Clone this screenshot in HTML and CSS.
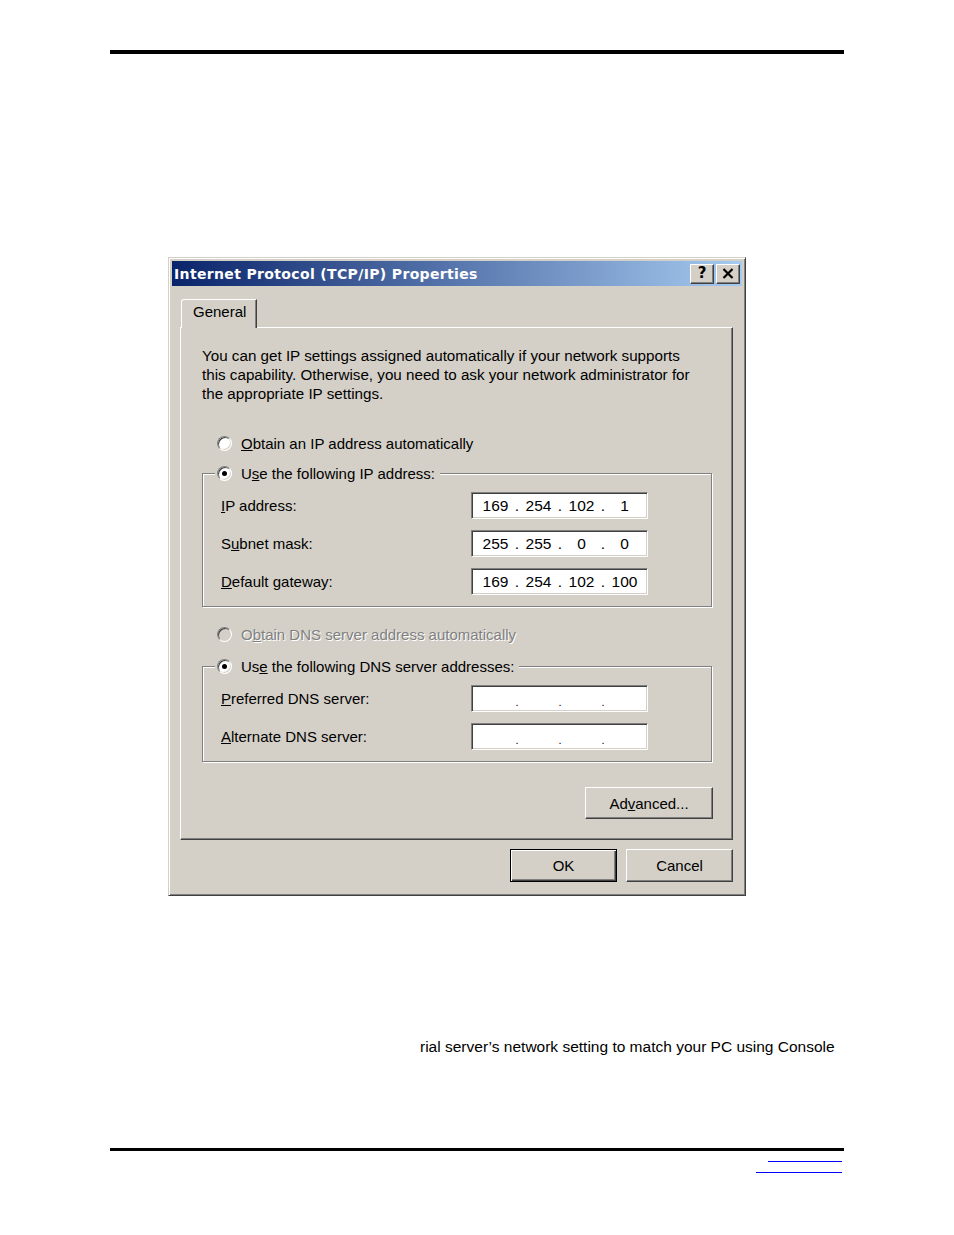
FILE: index.html
```html
<!DOCTYPE html>
<html>
<head>
<meta charset="utf-8">
<link rel="stylesheet" href="styles.css">
</head>
<body>
<div class="page">
  <div class="rule-top"></div>
  <div class="dialog">
    <div class="titlebar">
      <span class="title">Internet Protocol (TCP/IP) Properties</span>
      <div class="tbtns">
        <span class="tbtn help">?</span>
        <span class="tbtn close"><svg width="12" height="11" viewBox="0 0 12 11"><path d="M1.5 1 L10.5 10 M10.5 1 L1.5 10" stroke="#000" stroke-width="2.2" fill="none"/></svg></span>
      </div>
    </div>
    <div class="tabs"><div class="tab">General</div></div>
    <div class="panel">
      <p class="intro">You can get IP settings assigned automatically if your network supports<br>this capability. Otherwise, you need to ask your network administrator for<br>the appropriate IP settings.</p>
      <div class="opt opt-first"><span class="radio"></span><span><u>O</u>btain an IP address automatically</span></div>
      <div class="group">
        <div class="legend"><span class="radio checked"></span><span>U<u>s</u>e the following IP address:</span></div>
        <div class="field"><span class="lbl"><u>I</u>P address:</span>
          <div class="ipbox"><span class="oct">169</span><span class="dot">.</span><span class="oct">254</span><span class="dot">.</span><span class="oct">102</span><span class="dot">.</span><span class="oct">1</span></div></div>
        <div class="field"><span class="lbl">S<u>u</u>bnet mask:</span>
          <div class="ipbox"><span class="oct">255</span><span class="dot">.</span><span class="oct">255</span><span class="dot">.</span><span class="oct">0</span><span class="dot">.</span><span class="oct">0</span></div></div>
        <div class="field"><span class="lbl"><u>D</u>efault gateway:</span>
          <div class="ipbox"><span class="oct">169</span><span class="dot">.</span><span class="oct">254</span><span class="dot">.</span><span class="oct">102</span><span class="dot">.</span><span class="oct">100</span></div></div>
      </div>
      <div class="opt opt-disabled"><span class="radio disabled"></span><span class="dis">O<u>b</u>tain DNS server address automatically</span></div>
      <div class="group group2">
        <div class="legend"><span class="radio checked"></span><span>Us<u>e</u> the following DNS server addresses:</span></div>
        <div class="field"><span class="lbl"><u>P</u>referred DNS server:</span>
          <div class="ipbox empty"><span class="oct"></span><span class="dot">.</span><span class="oct"></span><span class="dot">.</span><span class="oct"></span><span class="dot">.</span><span class="oct"></span></div></div>
        <div class="field"><span class="lbl"><u>A</u>lternate DNS server:</span>
          <div class="ipbox empty"><span class="oct"></span><span class="dot">.</span><span class="oct"></span><span class="dot">.</span><span class="oct"></span><span class="dot">.</span><span class="oct"></span></div></div>
      </div>
      <div class="adv-row"><span class="btn adv">Ad<u>v</u>anced...</span></div>
    </div>
    <div class="dlg-buttons"><span class="btn default">OK</span><span class="btn">Cancel</span></div>
  </div>
  <p class="bottom-text">rial server’s network setting to match your PC using Console</p>
  <div class="rule-bottom"></div>
  <div class="ln ln1"></div>
  <div class="ln ln2"></div>
</div>
</body>
</html>
```
FILE: styles.css
```css
html, body { margin: 0; padding: 0; background: #fff; }
.page { width: 954px; height: 1235px; box-sizing: border-box; padding: 50px 110px 0; font-family: "Liberation Sans", Arial, sans-serif; }
.rule-top { height: 4px; background: #000; width: 734px; }
.dialog {
  margin: 203px 0 0 58px; width: 578px; height: 639px; box-sizing: border-box;
  background: #d4d0c8; border: 1px solid; border-color: #d4d0c8 #404040 #404040 #d4d0c8;
  box-shadow: inset 1px 1px 0 #fff, inset -1px -1px 0 #808080;
  padding: 3px 3px 10px 3px; font-size: 15px; color: #000;
}
.titlebar {
  height: 25px; display: flex; align-items: center; justify-content: space-between;
  background: linear-gradient(to right, #0a246a, #a6caf0); padding: 0 2px;
}
.title { color: #fff; font-family: "DejaVu Sans", sans-serif; font-weight: bold; font-size: 14px; letter-spacing: 0.35px; }
.tbtns { display: flex; gap: 2px; }
.tbtn {
  width: 24px; height: 20px; box-sizing: border-box; background: #d4d0c8; display: flex; align-items: center; justify-content: center;
  border: 1px solid; border-color: #fff #404040 #404040 #fff; box-shadow: inset -1px -1px 0 #808080;
  font-family: "DejaVu Sans", sans-serif; font-weight: bold; font-size: 15px; color: #000; line-height: 1;
}
.tabs { margin: 13px 0 0 9px; display: flex; }
.tab {
  position: relative; z-index: 1; width: 76px; height: 29px; box-sizing: border-box; margin-bottom: -1px;
  background: #d4d0c8; border-top: 1px solid #fff; border-left: 1px solid #fff; border-right: 1px solid #404040;
  box-shadow: inset -1px 0 0 #808080; border-top-left-radius: 3px;
  padding: 3px 0 0 11px; font-size: 15px;
}
.panel {
  margin: 0 9px 0 8px; height: 513px; box-sizing: border-box;
  border: 1px solid; border-color: #fff #404040 #404040 #fff; box-shadow: inset -1px -1px 0 #808080;
  padding: 18px 20px 0 21px;
}
.intro { margin: 0; line-height: 19px; font-size: 15.2px; }
.opt { display: flex; align-items: center; height: 20px; gap: 9px; }
.opt-first { margin: 30px 0 0 15px; }
.opt-disabled { margin: 17px 0 0 15px; }
.dis { color: #808080; text-shadow: 1px 1px 0 #fff; }
.radio {
  width: 15px; height: 15px; box-sizing: border-box; border-radius: 50%; background: #fff; position: relative; flex: none;
  border: 1px solid; border-color: #808080 #fff #fff #808080;
  box-shadow: inset 1px 1px 0 #404040, inset -1px -1px 0 #d4d0c8;
}
.radio.disabled { background: #d4d0c8; }
.radio.checked::after {
  content: ""; position: absolute; left: 4px; top: 4px; width: 5px; height: 5px; border-radius: 50%; background: #000;
}
.group {
  position: relative; margin-top: 20px; border: 1px solid #808080;
  box-shadow: inset 1px 1px 0 #fff, 1px 1px 0 #fff;
  padding: 18px 63px 11px 18px; display: flex; flex-direction: column; gap: 11px;
}
.group2 { margin-top: 22px; }
.legend {
  position: absolute; top: -11px; left: 12px; height: 20px; display: flex; align-items: center; gap: 9px;
  background: #d4d0c8; padding: 0 5px 0 2px;
}
.field { display: flex; align-items: center; justify-content: space-between; height: 27px; }
.ipbox {
  width: 177px; height: 27px; box-sizing: border-box; background: #fff;
  border: 1px solid; border-color: #808080 #fff #fff #808080;
  box-shadow: inset 1px 1px 0 #404040, inset -1px -1px 0 #d4d0c8;
  display: flex; align-items: center; padding-left: 5px; font-size: 15.5px;
}
.oct { width: 37px; text-align: center; }
.dot { width: 6px; text-align: center; }
.ipbox.empty .dot { font-size: 11px; padding-top: 7px; }
.adv-row { display: flex; justify-content: flex-end; margin-top: 25px; padding-right: 0; }
.btn {
  display: flex; align-items: center; justify-content: center; box-sizing: border-box; background: #d4d0c8;
  border: 1px solid; border-color: #fff #404040 #404040 #fff; box-shadow: inset -1px -1px 0 #808080;
  font-size: 15px; color: #000;
}
.adv { width: 128px; height: 32px; margin-right: -1px; }
.dlg-buttons { display: flex; justify-content: flex-end; gap: 9px; margin: 9px 9px 0 0; }
.dlg-buttons .btn { width: 107px; height: 33px; }
.btn.default { border: 1px solid #000; box-shadow: inset 1px 1px 0 #fff, inset -1px -1px 0 #404040, inset -2px -2px 0 #808080; }
.bottom-text { margin: 142px 0 0 310px; font-size: 15.5px; line-height: 18px; white-space: nowrap; }
.rule-bottom { margin-top: 92px; height: 3px; width: 734px; background: #000; }
.ln { height: 1px; background: #0000ff; }
.ln1 { margin: 10px 0 0 658px; width: 74px; }
.ln2 { margin: 10px 0 0 646px; width: 86px; }
```
